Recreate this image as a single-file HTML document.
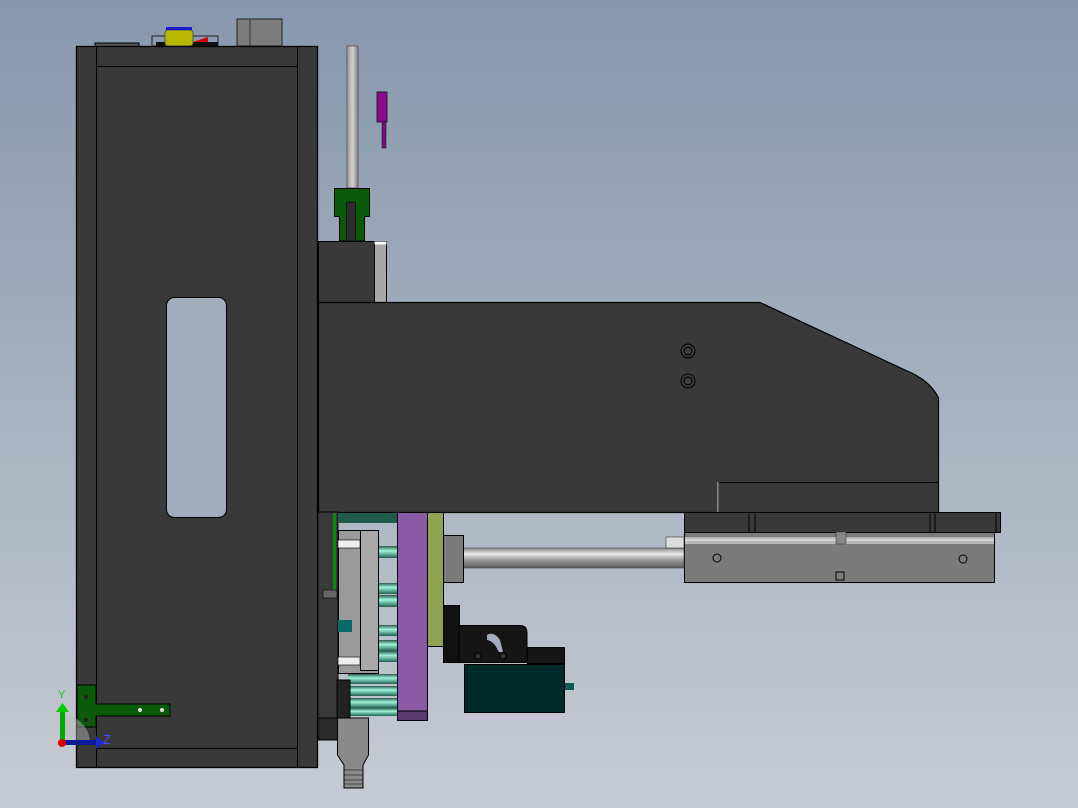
<!DOCTYPE html>
<html><head><meta charset="utf-8"><style>
html,body{margin:0;padding:0;width:1078px;height:808px;overflow:hidden}
</style></head><body>
<svg width="1078" height="808" viewBox="0 0 1078 808" xmlns="http://www.w3.org/2000/svg" font-family="Liberation Sans, sans-serif">
<defs>
<linearGradient id="bg" x1="0" y1="0" x2="0" y2="1">
<stop offset="0" stop-color="#8797ad"/><stop offset="1" stop-color="#c7cbd3"/></linearGradient>
<linearGradient id="rod" x1="0" y1="0" x2="0" y2="1">
<stop offset="0" stop-color="#8a8a8a"/><stop offset="0.3" stop-color="#e8e8e8"/><stop offset="0.6" stop-color="#9a9a9a"/><stop offset="1" stop-color="#5a5a5a"/></linearGradient>
<linearGradient id="vrod" x1="0" y1="0" x2="1" y2="0">
<stop offset="0" stop-color="#9a9a9a"/><stop offset="0.5" stop-color="#cfcfd4"/><stop offset="1" stop-color="#8a8590"/></linearGradient>
<linearGradient id="teal" x1="0" y1="0" x2="0" y2="1">
<stop offset="0" stop-color="#2a5a4a"/><stop offset="0.4" stop-color="#9ff5dc"/><stop offset="1" stop-color="#1e6050"/></linearGradient>
</defs>
<rect width="1078" height="808" fill="url(#bg)"/>

<rect x="95" y="43" width="44" height="4" fill="#555" stroke="#000" stroke-width="1"/>
<rect x="152" y="36" width="66" height="10" fill="none" stroke="#222" stroke-width="1"/>
<rect x="156" y="42" width="62" height="4" fill="#111"/>
<path d="M193 42 L208 37 L208 42 Z" fill="#c00"/>
<rect x="165" y="30" width="28" height="16" rx="3" fill="#b8b800" stroke="#444" stroke-width="0.8"/>
<rect x="166" y="27" width="26" height="3" fill="#1a1acc"/>
<rect x="237" y="19" width="45" height="27" fill="#7c7c7c" stroke="#222"/>
<line x1="250" y1="19" x2="250" y2="46" stroke="#333"/>

<rect x="76.5" y="46.5" width="241" height="721" fill="#393939" stroke="#000" stroke-width="1.3"/>
<line x1="96.5" y1="47" x2="96.5" y2="767" stroke="#000"/>
<line x1="297.5" y1="47" x2="297.5" y2="767" stroke="#000"/>
<line x1="96" y1="66.5" x2="297" y2="66.5" stroke="#000"/>
<line x1="96" y1="748.5" x2="297" y2="748.5" stroke="#000"/>
<rect x="166.5" y="297.5" width="60" height="220" rx="8" fill="#a3acbb" stroke="#000"/>

<path d="M77 685 H96 V704 H170 V716 H96 V727 H77 Z" fill="#0a5a0a" stroke="#000"/>
<circle cx="86" cy="697" r="2.2" fill="#222"/><circle cx="86" cy="720" r="2.2" fill="#222"/>
<circle cx="140" cy="710" r="2" fill="#ddd"/><circle cx="162" cy="710" r="2" fill="#ddd"/>
<path d="M62 742 L62 715 A28 28 0 0 1 90 742 Z" fill="#bbb" opacity="0.45"/>
<rect x="60" y="710" width="5" height="32" fill="#0a0"/>
<path d="M56 712 L62.5 703 L69 712 Z" fill="#0c0"/>
<rect x="62" y="740" width="36" height="5" fill="#0c1a9a"/>
<path d="M96 736 L104 742.5 L96 749 Z" fill="#1a2ad0"/>
<circle cx="62" cy="743" r="4" fill="#d00"/>
<text x="58" y="698" font-size="11" fill="#1c1">Y</text>
<text x="103" y="744" font-size="13" fill="#3a4aff">Z</text>

<rect x="347" y="46" width="11" height="142" fill="url(#vrod)" stroke="#333" stroke-width="0.6"/>
<rect x="377" y="92" width="10" height="30" fill="#8a0a8a" stroke="#222"/>
<rect x="382" y="122" width="4" height="26" fill="#7a0a7a" stroke="#222" stroke-width="0.6"/>
<path d="M334.5 188.5 H369.5 V216.5 H364.5 V241 H339.5 V216.5 H334.5 Z" fill="#0b5a0b" stroke="#000"/>
<rect x="346.5" y="202" width="9" height="39" fill="#2e2e2e" stroke="#000" stroke-width="0.6"/>
<rect x="318.5" y="241.5" width="68" height="61" fill="#393939" stroke="#000"/>
<rect x="374.5" y="241.5" width="12" height="61" fill="#a8a8a8" stroke="#000"/>
<rect x="374.5" y="241.5" width="12" height="3" fill="#fff"/>

<path d="M318.5 302.5 H760 L905 370 Q930 380 938.5 398 V512.5 H318.5 Z" fill="#393939" stroke="#000" stroke-width="1.2"/>
<g fill="none" stroke="#000"><circle cx="688" cy="351" r="7"/><circle cx="688" cy="351" r="4"/><circle cx="688" cy="381" r="7"/><circle cx="688" cy="381" r="4"/></g>
<rect x="718.5" y="482.5" width="220" height="30" fill="#393939" stroke="#000"/>
<line x1="718" y1="482" x2="718" y2="512" stroke="#ccc"/>

<rect x="684.5" y="512.5" width="316" height="20" fill="#393939" stroke="#000"/>
<g stroke="#000"><line x1="749" y1="513" x2="749" y2="532"/><line x1="755" y1="513" x2="755" y2="532"/><line x1="930" y1="513" x2="930" y2="532"/><line x1="935" y1="513" x2="935" y2="532"/><line x1="996" y1="513" x2="996" y2="532"/></g>
<rect x="684.5" y="532.5" width="310" height="50" fill="#7b7b7b" stroke="#000"/>
<rect x="685" y="537" width="309" height="7" fill="#b8b8b8"/>
<line x1="685" y1="540" x2="994" y2="540" stroke="#eee"/>
<rect x="836" y="532" width="10" height="12" fill="#888" stroke="#333" stroke-width="0.5"/>
<g fill="none" stroke="#000"><circle cx="717" cy="558" r="4"/><circle cx="963" cy="559" r="4"/><rect x="836" y="572" width="8" height="8"/></g>
<rect x="462" y="548" width="222" height="20" fill="url(#rod)" stroke="#444" stroke-width="0.6"/>
<rect x="666" y="537" width="18" height="11" fill="#ddd" stroke="#333" stroke-width="0.6"/>
<rect x="443.5" y="535.5" width="20" height="47" fill="#7b7b7b" stroke="#000"/>

<rect x="318" y="512" width="20" height="228" fill="#3a3a3a" stroke="#000"/>
<rect x="333" y="513" width="3" height="78" fill="#0a8a0a"/>
<rect x="323" y="590" width="14" height="8" fill="#666" stroke="#000" stroke-width="0.6"/>
<rect x="338" y="513" width="60" height="10" fill="#1f5a4a"/>
<rect x="338.5" y="530.5" width="40" height="143" fill="#9a9a9a" stroke="#000"/>
<rect x="360.5" y="530.5" width="18" height="140" fill="#a9a9a9" stroke="#000"/>
<rect x="338" y="540" width="22" height="8" fill="#eee" stroke="#000" stroke-width="0.6"/>
<rect x="338" y="657" width="22" height="8" fill="#eee" stroke="#000" stroke-width="0.6"/>
<rect x="338" y="620" width="14" height="12" fill="#0a6a6a"/>
<g fill="url(#teal)">
<rect x="379" y="546" width="18" height="12"/><rect x="379" y="583" width="18" height="11"/><rect x="379" y="595" width="18" height="12"/>
<rect x="379" y="625" width="18" height="11"/><rect x="379" y="640" width="18" height="11"/><rect x="379" y="651" width="18" height="11"/>
<rect x="348" y="674" width="49" height="10"/><rect x="348" y="686" width="49" height="10"/><rect x="348" y="698" width="49" height="10"/><rect x="348" y="708" width="49" height="8"/></g>
<rect x="337" y="680" width="13" height="38" fill="#222" stroke="#000"/>
<rect x="318" y="718" width="20" height="22" fill="#2a2a2a" stroke="#000"/>
<path d="M337.5 718 H368.5 V755 L363 765 V788 H344 V765 L337.5 755 Z" fill="#8a8a8a" stroke="#000"/>
<g stroke="#000" stroke-width="0.6"><line x1="344" y1="770" x2="363" y2="770"/><line x1="344" y1="775" x2="363" y2="775"/><line x1="344" y1="780" x2="363" y2="780"/><line x1="344" y1="784" x2="363" y2="784"/></g>
<rect x="397.5" y="512.5" width="30" height="208" fill="#8a5aa5" stroke="#000"/>
<rect x="397.5" y="711" width="30" height="9.5" fill="#5a3870" stroke="#000"/>
<rect x="427.5" y="512.5" width="16" height="134" fill="#8fa352" stroke="#000"/>
<rect x="443.5" y="605.5" width="16" height="57" fill="#111" stroke="#000"/>
<path d="M459 625.5 H520 Q527 625.5 527 633 V662.5 H459 Z" fill="#151515" stroke="#000"/>
<path d="M487 635 Q494 631 500 640 L503 652 L499 652 L495 645 Q490 640 487 640 Z" fill="#a3acbb"/>
<circle cx="478" cy="656" r="3" fill="#333" stroke="#000"/><circle cx="503" cy="656" r="3" fill="#333" stroke="#000"/>
<rect x="527.5" y="647.5" width="37" height="16" fill="#151515" stroke="#000"/>
<rect x="464.5" y="664.5" width="100" height="48" fill="#002a2a" stroke="#000"/>
<rect x="565" y="683" width="9" height="7" fill="#0a5a5a"/>
</svg>
</body></html>
